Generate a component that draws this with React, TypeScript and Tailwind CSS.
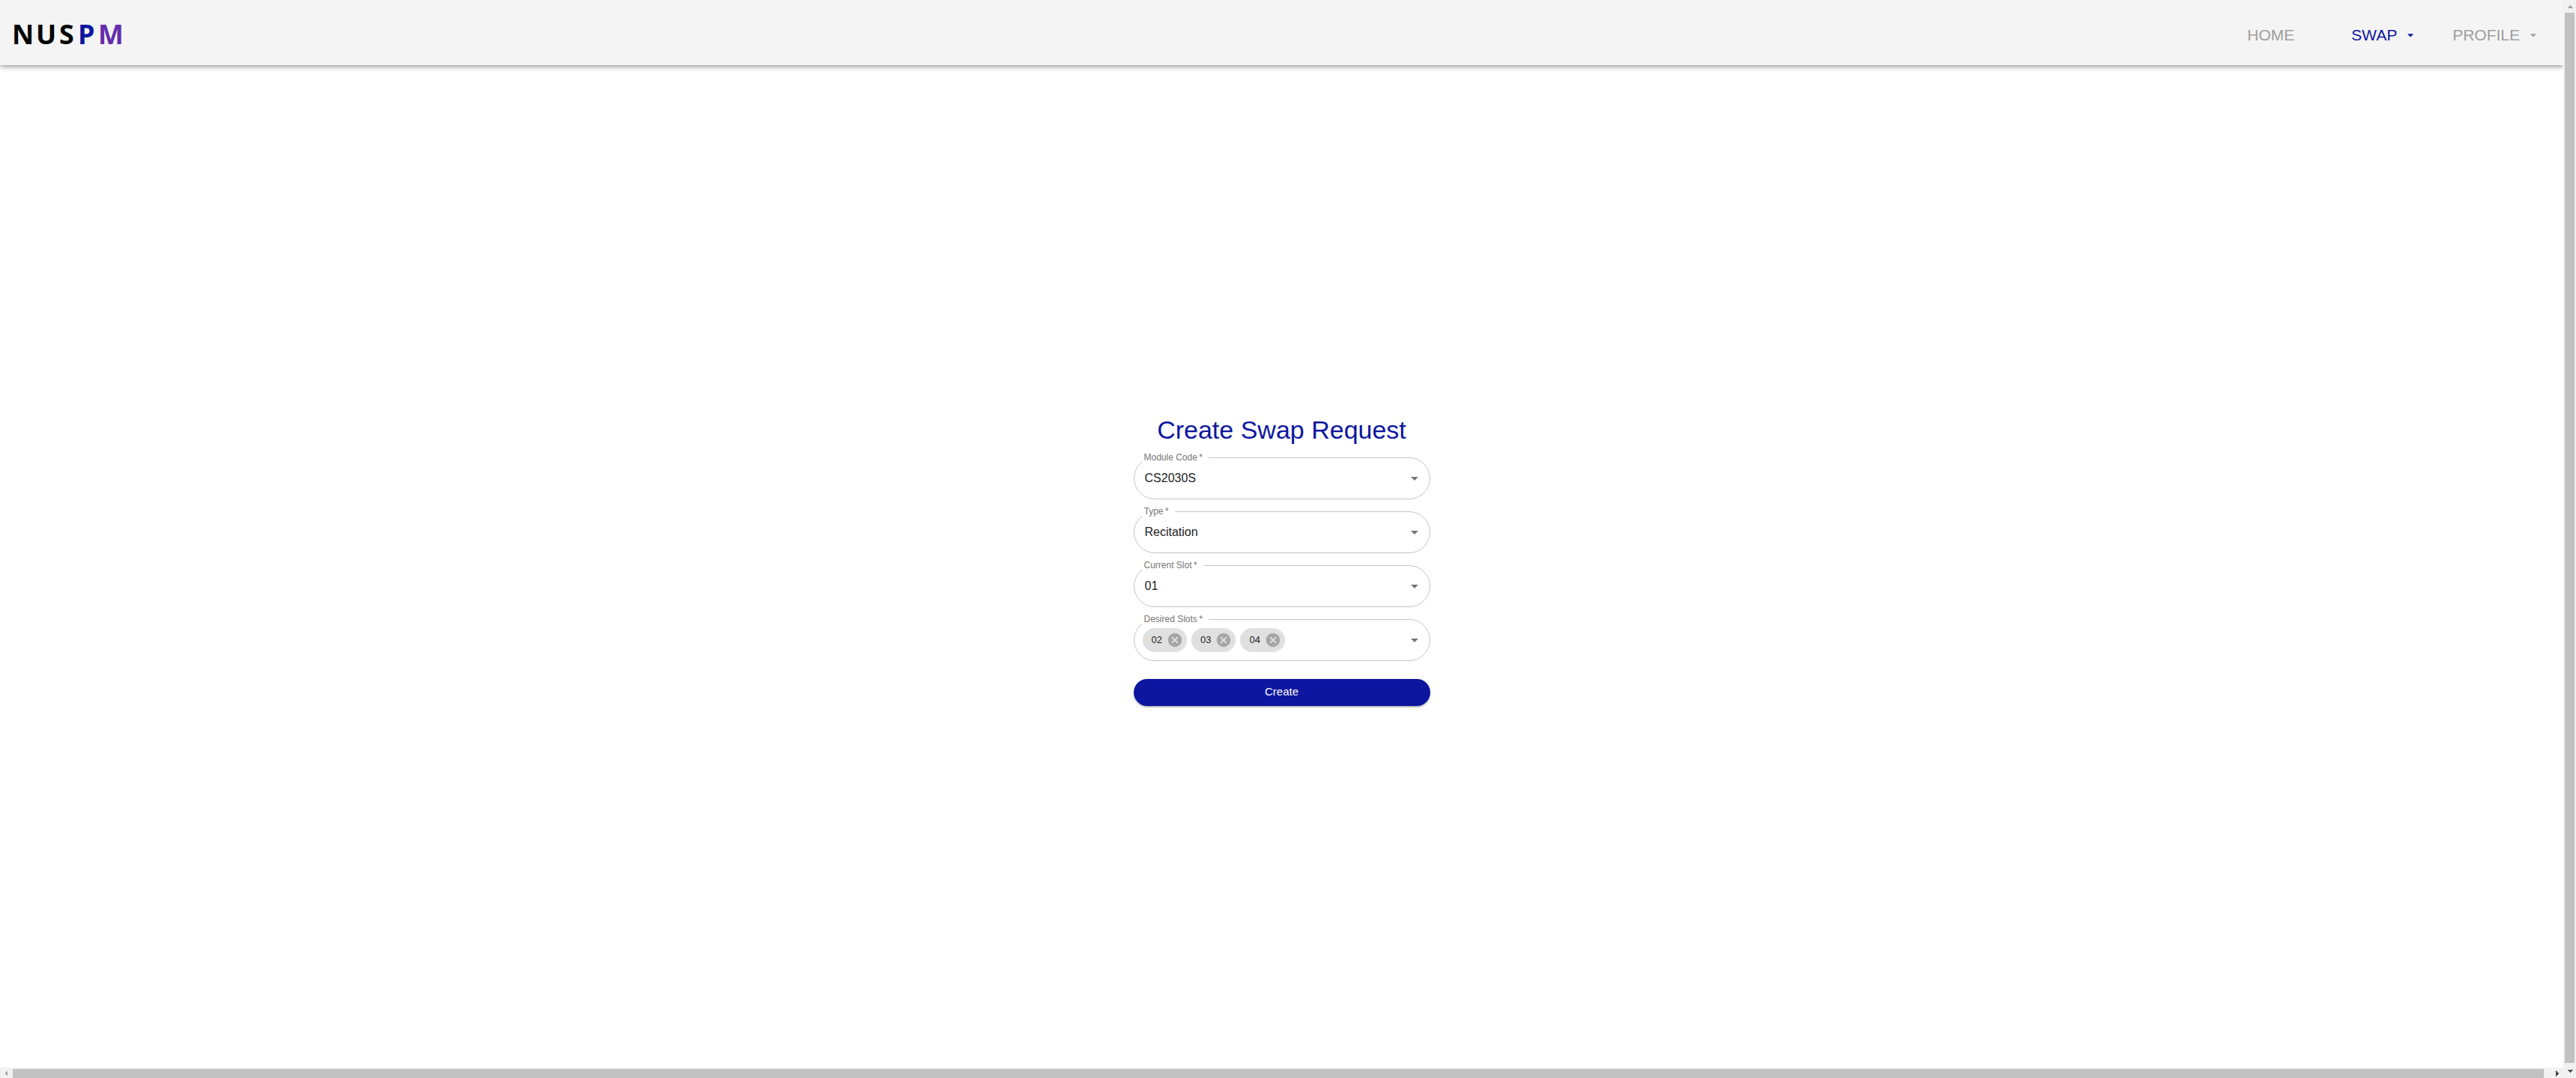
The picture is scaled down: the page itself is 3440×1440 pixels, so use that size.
import React, { useState } from "react";

const arrowPath = "M7 10l5 5 5-5z";
const cancelPath =
  "M12 2C6.47 2 2 6.47 2 12s4.47 10 10 10 10-4.47 10-10S17.53 2 12 2zm5 13.59L15.59 17 12 13.41 8.41 17 7 15.59 10.59 12 7 8.41 8.41 7 12 10.59 15.59 7 17 8.41 13.41 12 17 15.59z";

function ArrowIcon({ className }: { className: string }) {
  return (
    <svg viewBox="0 0 24 24" fill="currentColor" aria-hidden="true" className={className}>
      <path d={arrowPath} />
    </svg>
  );
}

function Logo() {
  return (
    <a href="#" aria-label="NUSPM" className="block">
      <svg
        width="160"
        height="60"
        viewBox="0 0 160 60"
        fontFamily='"Open Sans", "Noto Sans", sans-serif'
        fontSize="36"
        fontWeight="700"
        className="overflow-visible"
      >
        <text y="45" x="0 32 63">
          NUS
        </text>
        <text y="45" x="88" fill="#0d169f">
          P
        </text>
        <text y="45" x="115" fill="#652dac">
          M
        </text>
      </svg>
    </a>
  );
}

function NavButton({ label, color }: { label: string; color: string }) {
  return (
    <button type="button" className={`flex items-center gap-2 text-[21px] leading-7 ${color}`}>
      {label}
      <ArrowIcon className="size-5" />
    </button>
  );
}

function Outline({ id, label, children }: { id: string; label: string; children: React.ReactNode }) {
  return (
    <div className="relative h-14">
      <label htmlFor={id} className="absolute -top-2 left-3.5 z-10 text-xs leading-4 text-[#757575]">
        {label}&thinsp;*
      </label>
      {children}
      <fieldset
        aria-hidden="true"
        className="pointer-events-none absolute inset-x-0 -top-[5px] bottom-0 min-w-0 rounded-[28px] border border-[#c4c4c4] px-2"
      >
        <legend className="invisible h-[11px] px-1.5 text-xs leading-[11px]">
          {label}&nbsp;*
        </legend>
      </fieldset>
    </div>
  );
}

function SelectField({ id, label, options }: { id: string; label: string; options: string[] }) {
  return (
    <Outline id={id} label={label}>
      <select
        id={id}
        className="h-14 w-full appearance-none rounded-full bg-transparent px-[15px] text-base text-[#212121] outline-none"
      >
        {options.map((o) => (
          <option key={o}>{o}</option>
        ))}
      </select>
      <ArrowIcon className="pointer-events-none absolute right-[9px] top-4 size-6 text-[#757575]" />
    </Outline>
  );
}

function DesiredSlots() {
  const [slots, setSlots] = useState(["02", "03", "04"]);
  return (
    <Outline id="desired" label="Desired Slots">
      <div className="flex h-14 items-center gap-1.5 pl-3 pr-[9px]">
        {slots.map((s) => (
          <span
            key={s}
            className="flex h-8 items-center gap-1.5 rounded-full bg-[#e0e0e0] pl-3 pr-[5px] text-[13px] text-[#212121]"
          >
            {s}
            <button
              type="button"
              aria-label={`Remove ${s}`}
              onClick={() => setSlots(slots.filter((x) => x !== s))}
              className="text-[#a6a6a6]"
            >
              <svg viewBox="0 0 24 24" fill="currentColor" className="size-[22px]">
                <path d={cancelPath} />
              </svg>
            </button>
          </span>
        ))}
        <input id="desired" type="text" className="min-w-0 flex-1 bg-transparent text-base outline-none" />
        <button type="button" aria-label="Open" className="text-[#757575]">
          <ArrowIcon className="size-6" />
        </button>
      </div>
    </Outline>
  );
}

function VerticalBar() {
  return (
    <div aria-hidden="true" className="flex w-[17px] flex-col items-center bg-[#f1f1f1]">
      <svg width="17" height="17" fill="#a3a3a3" shapeRendering="crispEdges">
        <path d="M5 11h8L9 7z" />
      </svg>
      <div className="w-[13px] flex-1 bg-[#c1c1c1]" />
      <svg width="17" height="20" fill="#505050" shapeRendering="crispEdges">
        <path d="M5 9h8l-4 4z" />
      </svg>
    </div>
  );
}

function HorizontalBar() {
  return (
    <div aria-hidden="true" className="flex h-3.5 bg-[#f1f1f1]">
      <svg width="17" height="14" fill="#a3a3a3" shapeRendering="crispEdges">
        <path d="M10 4v8L6 8z" />
      </svg>
      <div className="mt-0.5 flex-1 bg-[#c1c1c1]" />
      <svg width="26" height="14" fill="#505050" shapeRendering="crispEdges">
        <path d="M16 4v8l4-4z" />
      </svg>
    </div>
  );
}

export default function App() {
  return (
    <div className="flex h-screen overflow-hidden bg-white font-['Liberation_Sans',Arial,sans-serif]">
      <div className="flex min-w-0 flex-1 flex-col">
        <header className="flex h-[87px] items-center justify-between bg-[#f4f4f4] pl-4 pr-[30px] shadow-[0_2px_4px_-1px_rgba(0,0,0,0.2),0_4px_5px_0_rgba(0,0,0,0.14),0_1px_10px_0_rgba(0,0,0,0.12)]">
          <Logo />
          <nav className="flex items-center gap-[76px] pt-1.5">
            <a href="#" className="text-[21px] leading-7 text-[#9e9e9e]">
              HOME
            </a>
            <div className="flex gap-[46px]">
              <NavButton label="SWAP" color="text-[#0d169f]" />
              <NavButton label="PROFILE" color="text-[#9e9e9e]" />
            </div>
          </nav>
        </header>
        <main className="flex flex-1 items-center justify-center pb-[18px]">
          <form className="flex w-[396px] flex-col gap-4" onSubmit={(e) => e.preventDefault()}>
            <h1 className="text-center text-[34px] leading-[42px] text-[#0d169f]">Create Swap Request</h1>
            <SelectField id="module" label="Module Code" options={["CS2030S"]} />
            <SelectField id="type" label="Type" options={["Recitation"]} />
            <SelectField id="current" label="Current Slot" options={["01"]} />
            <DesiredSlots />
            <button
              type="submit"
              className="mt-2 h-9 rounded-full bg-[#0d169f] text-[15px] text-white shadow-[0_3px_1px_-2px_rgba(0,0,0,0.2),0_2px_2px_0_rgba(0,0,0,0.14),0_1px_5px_0_rgba(0,0,0,0.12)]"
            >
              Create
            </button>
          </form>
        </main>
        <HorizontalBar />
      </div>
      <VerticalBar />
    </div>
  );
}
